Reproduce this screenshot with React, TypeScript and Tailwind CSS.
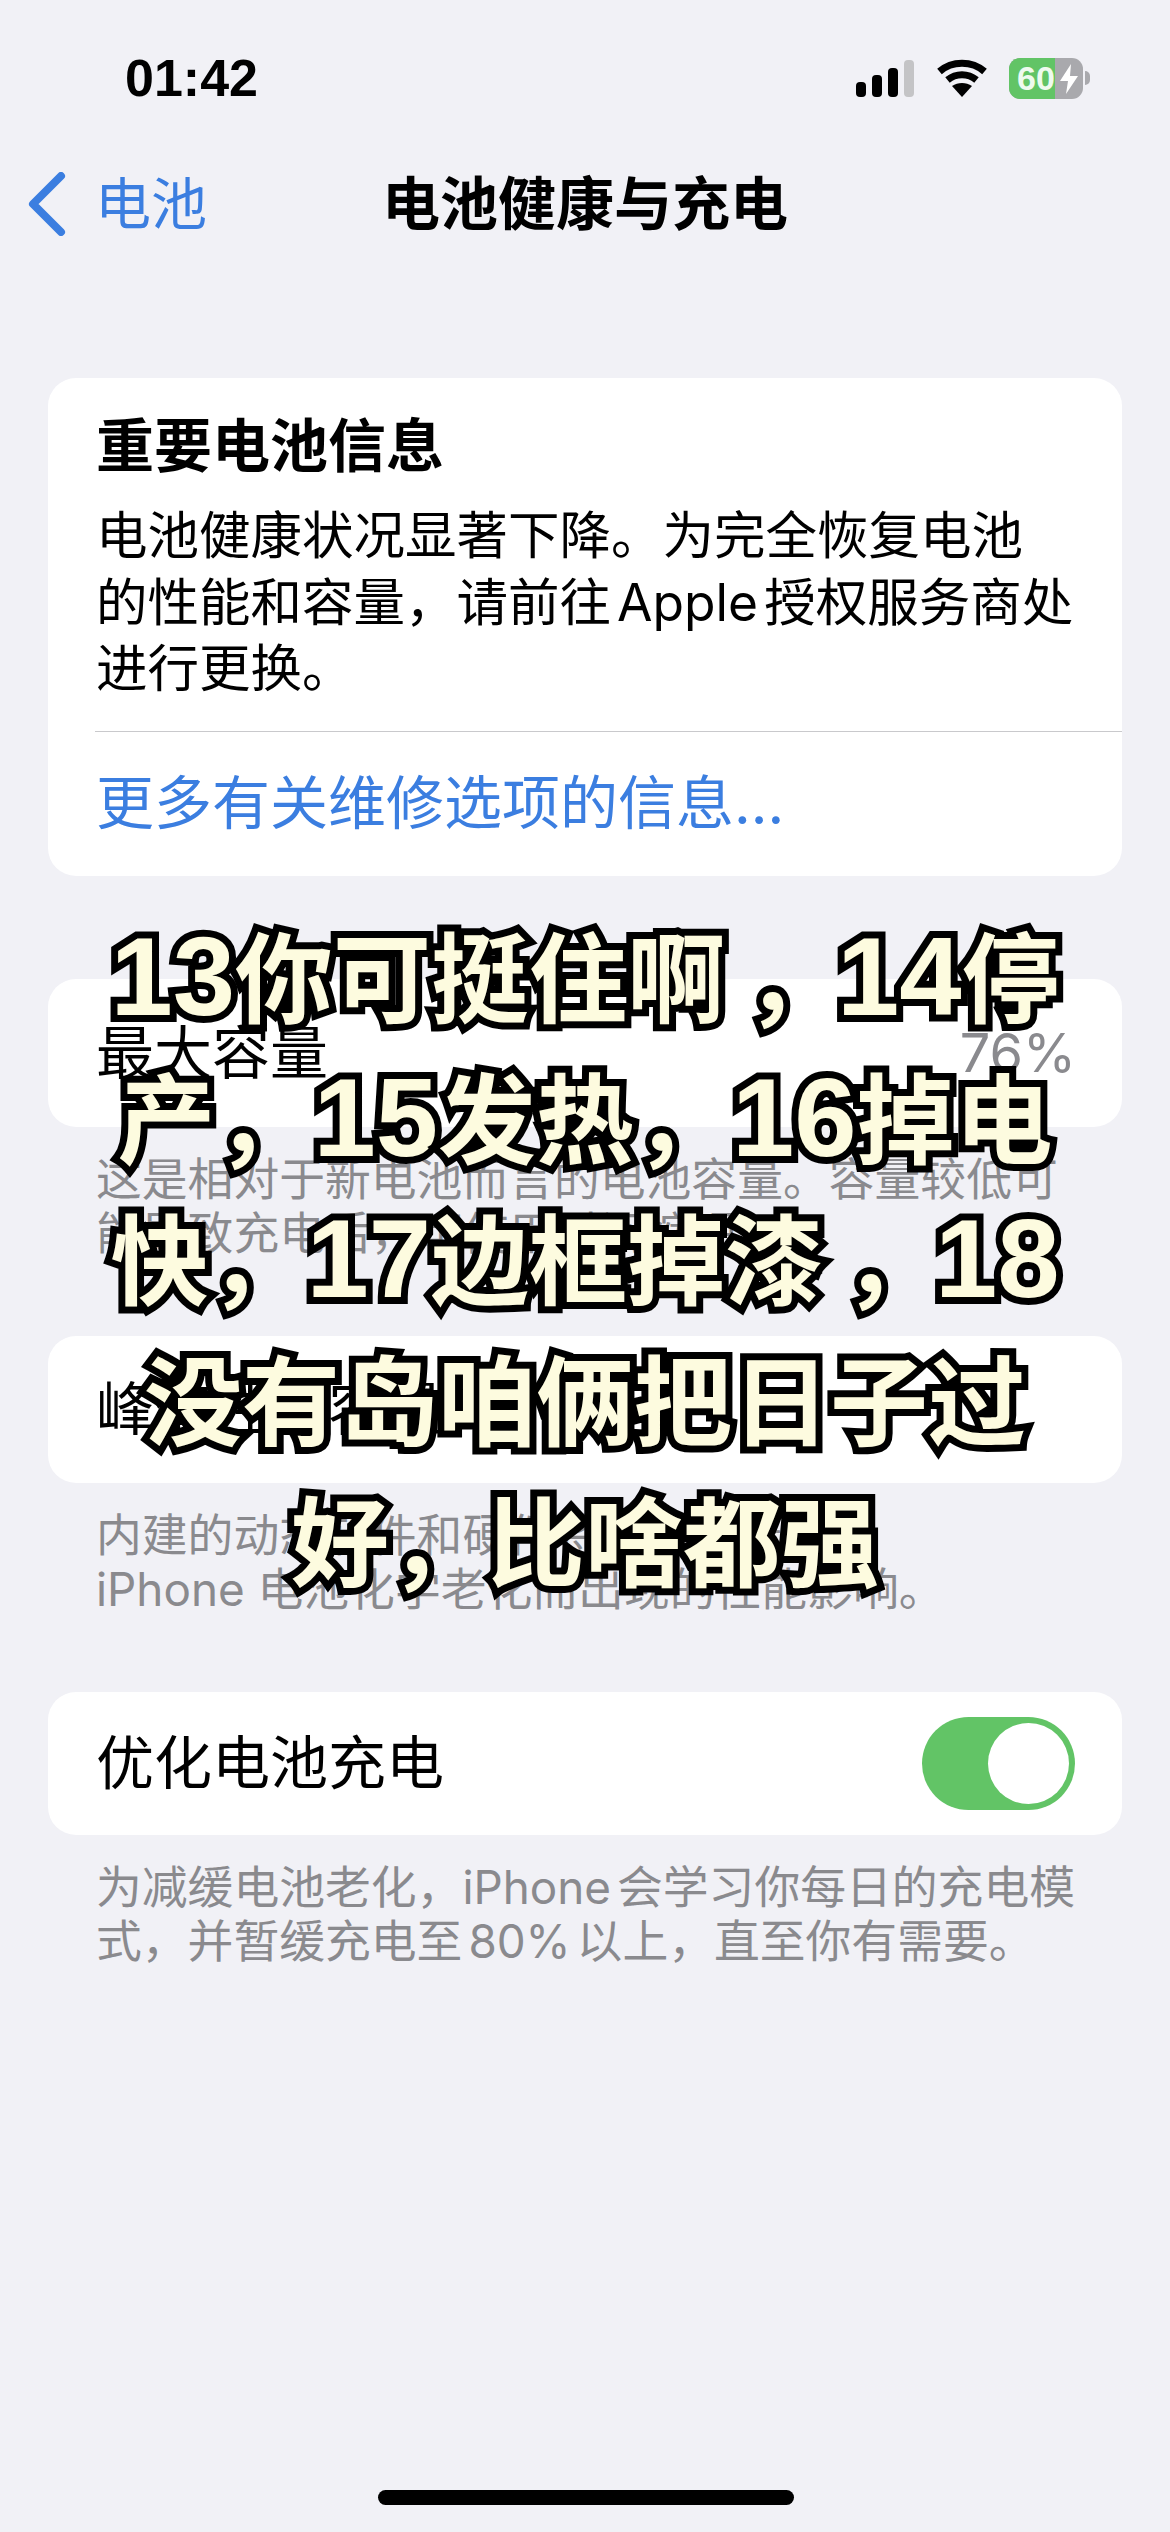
import type { ReactNode } from 'react';

const baseFont = "font-['Inter','Noto_Sans_CJK_SC',sans-serif]";

function StatusIcons() {
  return (
    <div className="flex items-center">
      <svg width="58" height="37" viewBox="0 0 58 37" className="mr-[23px]">
        <rect x="0" y="22" width="10" height="15" rx="4" fill="#000" />
        <rect x="16" y="15" width="10" height="22" rx="4" fill="#000" />
        <rect x="32" y="8" width="10" height="29" rx="4" fill="#000" />
        <rect x="48" y="0" width="10" height="37" rx="4" fill="#c4c4c6" />
      </svg>
      <svg width="50" height="38" viewBox="0 0 50 38" className="mr-[22px]" fill="none" stroke="#000" strokeWidth="7">
        <path d="M2.5 12.5 C15 1.5 35 1.5 47.5 12.5" />
        <path d="M10.5 21 C19 14 31 14 39.5 21" />
        <path d="M15 27 L25 38 L35 27 C29 23 21 23 15 27 Z" fill="#000" stroke="none" />
      </svg>
      <div className="relative flex h-[41px] w-[74px] overflow-hidden rounded-[11px] bg-[#a9a9ad]">
        <div className="h-full w-[46px] bg-[#62c466]" />
        <span className="absolute left-[8px] top-0 font-['Liberation_Sans',sans-serif] text-[34px] font-bold leading-[41px] text-[#effaef]">60</span>
        <svg width="20" height="30" viewBox="0 0 20 30" className="absolute left-[50px] top-[6px]">
          <path d="M12 0 L1 17 H9 L7 30 L19 12 H11 Z" fill="#fff" />
        </svg>
      </div>
      <div className="ml-[2px] h-[14px] w-[5px] rounded-r-full bg-[#a9a9ad]" />
    </div>
  );
}

function Row({ label, value, height }: { label: string; value?: string; height: string }) {
  return (
    <div className={`flex items-center justify-between rounded-[28px] bg-white pl-[48px] pr-[46px] ${height}`}>
      <span className="text-[58px] leading-[60px] text-black">{label}</span>
      {value && <span className="text-[54px] leading-[60px] text-[#8a8a8e]">{value}</span>}
    </div>
  );
}

function Footer({ children }: { children: ReactNode }) {
  return (
    <p className="mt-[26px] whitespace-nowrap pl-[48px] text-[45.8px] leading-[54px] text-[#8a8a8e]">{children}</p>
  );
}

// digits in the caption are set larger than the hanzi around them
function Num({ children }: { children: ReactNode }) {
  return <span className="text-[112px] leading-none">{children}</span>;
}

export default function App() {
  return (
    <div className={`relative h-[2532px] w-[1170px] overflow-hidden bg-[#f1f1f6] ${baseFont}`}>
      <div className="flex h-[156px] items-center justify-between pl-[125px] pr-[80px]">
        <span className="font-['Liberation_Sans',sans-serif] text-[52px] font-bold leading-none text-black">01:42</span>
        <StatusIcons />
      </div>

      <div className="relative flex h-[96px] items-center justify-center">
        <div className="absolute left-[28px] top-0 flex h-full items-center">
          <svg width="38" height="64" viewBox="0 0 38 64" fill="none" stroke="#3b7ee0" strokeWidth="8" strokeLinecap="round" strokeLinejoin="round">
            <path d="M33 4 L5 32 L33 60" />
          </svg>
          <span className="ml-[29px] text-[56px] leading-none text-[#3b7ee0]">电池</span>
        </div>
        <h1 className="text-[58px] font-bold leading-none text-black">电池健康与充电</h1>
      </div>

      <div className="mt-[126px] px-[48px]">
        <div className="rounded-[28px] bg-white">
          <div className="whitespace-nowrap pl-[48px] pt-[38px]">
            <h2 className="text-[58px] font-bold leading-[60px] text-black">重要电池信息</h2>
            <p className="mt-[26px] text-[51.5px] leading-[66.5px] text-black">
              电池健康状况显著下降。为完全恢复电池
              <br />
              的性能和容量，请前往<span className="mx-[6px]">Apple</span>授权服务商处
              <br />
              进行更换。
            </p>
          </div>
          <div className="ml-[47px] mt-[29px] h-[1px] bg-[#c9c9cc]" />
          <div className="flex h-[144px] items-center px-[48px] text-[58px] text-[#3b7ee0]">更多有关维修选项的信息...</div>
        </div>

        <div className="mt-[103px]">
          <Row label="最大容量" value="76%" height="h-[148px]" />
          <Footer>
            这是相对于新电池而言的电池容量。容量较低可
            <br />
            能导致充电后，可使用时间缩短。
          </Footer>
        </div>

        <div className="mt-[75px]">
          <Row label="峰值性能容量" height="h-[147px]" />
          <Footer>
            内建的动态软件和硬件将减轻随着
            <br />
            iPhone 电池化学老化而出现的性能影响。
          </Footer>
        </div>

        <div className="mt-[75px]">
          <div className="flex h-[143px] items-center justify-between rounded-[28px] bg-white pl-[48px] pr-[47px]">
            <span className="text-[58px] leading-[60px] text-black">优化电池充电</span>
            <div className="relative h-[93px] w-[153px] rounded-full bg-[#62c466]">
              <div className="absolute right-[6px] top-[6px] h-[81px] w-[81px] rounded-full bg-white" />
            </div>
          </div>
          <Footer>
            为减缓电池老化，<span className="mr-[6px]">iPhone</span>会学习你每日的充电模
            <br />
            式，并暂缓充电至<span className="mx-[6px]">80%</span>以上，直至你有需要。
          </Footer>
        </div>
      </div>

      {/* video caption that sits on top of the settings page */}
      <div className="absolute left-0 top-[911px] w-[1170px] whitespace-nowrap text-center font-['Liberation_Sans','Noto_Sans_CJK_SC',sans-serif] text-[98px] font-bold leading-[141px] text-[#fdfbdf] [-webkit-text-stroke:14px_#000] [paint-order:stroke_fill] [text-shadow:3px_3px_0_#000]">
        <Num>13</Num>你可挺住啊<span className="ml-[20px] mr-[-6px]">，</span><Num>14</Num>停
        <br />
        产，<Num>15</Num>发热，<Num>16</Num>掉电
        <br />
        快，<Num>17</Num>边框掉漆<span className="ml-[20px] mr-[-6px]">，</span><Num>18</Num>
        <br />
        没有岛咱俩把日子过
        <br />
        好，比啥都强
      </div>

      <div className="absolute bottom-[27px] left-[378px] h-[15px] w-[416px] rounded-full bg-black" />
    </div>
  );
}
